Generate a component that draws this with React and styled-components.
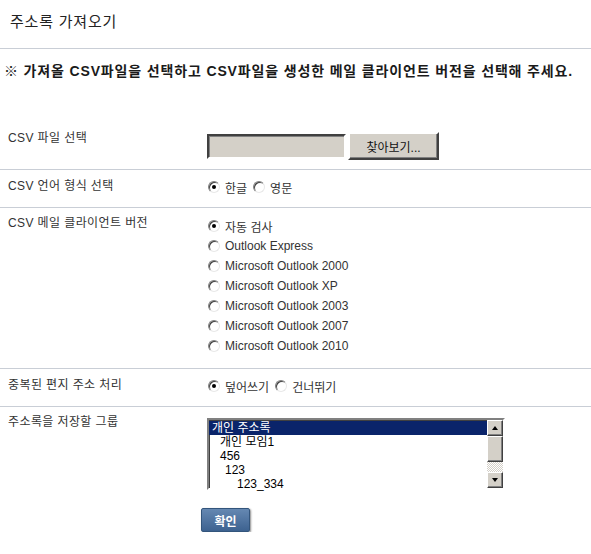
import React, { useState } from "react";
import styled, { createGlobalStyle } from "styled-components";

const GlobalStyle = createGlobalStyle`
  body {
    margin: 0;
    background: #fff;
    font-family: "Liberation Sans", "Noto Sans CJK KR", sans-serif;
    color: #222;
  }
`;

const Page = styled.div`
  width: 591px;
  display: flex;
  flex-direction: column;
`;

const Header = styled.div`
  height: 34px;
  border-bottom: 1px solid #c9ced6;
  padding: 14px 0 0 10px;
`;

const Title = styled.h1`
  margin: 0;
  font-size: 15px;
  font-weight: normal;
  letter-spacing: 0.8px;
  line-height: 16px;
  color: #222;
`;

const Notice = styled.p`
  margin: 0;
  padding: 13px 0 0 4px;
  font-size: 14px;
  font-weight: bold;
  letter-spacing: 0.85px;
  line-height: 18px;
  color: #1a1a1a;
  white-space: nowrap;
`;

const Form = styled.div`
  margin-top: 42px;
  display: flex;
  flex-direction: column;
`;

const Row = styled.div`
  display: grid;
  grid-template-columns: 207px 1fr;
  align-items: start;
  padding: ${(p) => p.$pad};
  border-bottom: ${(p) => (p.$last ? "none" : "1px solid #c9ced6")};
`;

const Label = styled.div`
  padding-left: 8px;
  margin-top: ${(p) => p.$mt || 0}px;
  font-size: 12px;
  line-height: 12px;
  letter-spacing: 0.4px;
  color: #333;
  white-space: nowrap;
`;

const Field = styled.div`
  display: flex;
  flex-direction: ${(p) => (p.$column ? "column" : "row")};
  align-items: ${(p) => (p.$column ? "flex-start" : "center")};
`;

const FileBox = styled.div`
  width: 135px;
  height: 21px;
  background: #d4d0c8;
  border: 2px solid;
  border-color: #404040 #fff #fff #404040;
  box-shadow: inset 1px 1px 0 #808080;
`;

const BrowseButton = styled.button`
  width: 91px;
  height: 28px;
  margin-left: 2px;
  padding: 0;
  background: #d4d0c8;
  border: 2px solid;
  border-color: #fff #404040 #404040 #fff;
  box-shadow: inset -1px -1px 0 #808080;
  font-family: "Liberation Sans", "Noto Sans CJK KR", sans-serif;
  font-size: 12px;
  color: #111;
`;

const Option = styled.label`
  display: inline-flex;
  align-items: center;
  height: 20px;
  margin-right: 5px;
  font-size: 12px;
  color: #333;
  cursor: pointer;
`;

const RadioDot = styled.span`
  width: 10px;
  height: 10px;
  margin: 0 5px 0 1px;
  border-radius: 50%;
  background: #fff;
  border: 1px solid;
  border-color: #808080 #e8e8e8 #e8e8e8 #808080;
  box-shadow: inset 1px 1px 0 #404040;
  display: flex;
  align-items: center;
  justify-content: center;
  flex-shrink: 0;

  &::after {
    content: "";
    width: 4px;
    height: 4px;
    border-radius: 50%;
    background: ${(p) => (p.$checked ? "#000" : "transparent")};
  }
`;

const ListBox = styled.div`
  width: 294px;
  height: 68px;
  border: 2px solid;
  border-color: #808080 #fff #fff #808080;
  box-shadow: inset 1px 1px 0 #404040;
  display: flex;
  background: #fff;
`;

const ListItems = styled.div`
  flex: 1;
  display: flex;
  flex-direction: column;
  padding-top: 1px;
`;

const ListItem = styled.div`
  height: 14px;
  line-height: 14px;
  font-size: 12px;
  padding-left: ${(p) => p.$indent}px;
  background: ${(p) => (p.$selected ? "#0a246a" : "transparent")};
  color: ${(p) => (p.$selected ? "#fff" : "#000")};
  white-space: nowrap;
`;

const ScrollBar = styled.div`
  width: 16px;
  display: flex;
  flex-direction: column;
`;

const ScrollButton = styled.div`
  width: 16px;
  height: 16px;
  box-sizing: border-box;
  background: #d4d0c8;
  border: 1px solid;
  border-color: #fff #404040 #404040 #fff;
  box-shadow: inset -1px -1px 0 #808080;
  display: flex;
  align-items: center;
  justify-content: center;
`;

const Thumb = styled(ScrollButton)`
  height: 26px;
`;

const Track = styled.div`
  flex: 1;
  background: repeating-conic-gradient(#fff 0 25%, #d4d0c8 0 50%) 0 0 / 2px 2px;
`;

const Arrow = styled.span`
  width: 0;
  height: 0;
  border-left: 3px solid transparent;
  border-right: 3px solid transparent;
  ${(p) => (p.$down ? "border-top: 4px solid #000;" : "border-bottom: 4px solid #000;")}
`;

const Actions = styled.div`
  padding: 18px 0 0 201px;
`;

const ConfirmButton = styled.button`
  width: 49px;
  height: 24px;
  padding: 0;
  border: 1px solid #33557c;
  border-radius: 2px;
  background: linear-gradient(#6588b2, #3d6290);
  box-shadow: 1px 1px 2px rgba(0, 0, 0, 0.45);
  color: #fff;
  font-family: "Liberation Sans", "Noto Sans CJK KR", sans-serif;
  font-size: 12px;
  font-weight: bold;
  cursor: pointer;
`;

const Radio = ({ checked, onClick, children }) => (
  <Option onClick={onClick}>
    <RadioDot $checked={checked} />
    {children}
  </Option>
);

const clients = [
  "자동 검사",
  "Outlook Express",
  "Microsoft Outlook 2000",
  "Microsoft Outlook XP",
  "Microsoft Outlook 2003",
  "Microsoft Outlook 2007",
  "Microsoft Outlook 2010",
];

const groups = [
  { name: "개인 주소록", indent: 3 },
  { name: "개인 모임1", indent: 11 },
  { name: "456", indent: 11 },
  { name: "123", indent: 16 },
  { name: "123_334", indent: 28 },
];

const App = () => {
  const [lang, setLang] = useState("ko");
  const [client, setClient] = useState(0);
  const [dup, setDup] = useState("over");
  const [group, setGroup] = useState(0);

  return (
    <Page>
      <GlobalStyle />
      <Header>
        <Title>주소록 가져오기</Title>
      </Header>
      <Notice>
        ※ 가져올 CSV파일을 선택하고 CSV파일을 생성한 메일 클라이언트 버전을 선택해 주세요.
      </Notice>
      <Form>
        <Row $pad="10px 0 9px">
          <Label>CSV 파일 선택</Label>
          <Field>
            <FileBox />
            <BrowseButton>찾아보기...</BrowseButton>
          </Field>
        </Row>
        <Row $pad="7px 0 10px">
          <Label $mt={3}>CSV 언어 형식 선택</Label>
          <Field>
            <Radio checked={lang === "ko"} onClick={() => setLang("ko")}>한글</Radio>
            <Radio checked={lang === "en"} onClick={() => setLang("en")}>영문</Radio>
          </Field>
        </Row>
        <Row $pad="8px 0 12px">
          <Label $mt={1}>CSV 메일 클라이언트 버전</Label>
          <Field $column>
            {clients.map((c, i) => (
              <Radio key={c} checked={client === i} onClick={() => setClient(i)}>
                {c}
              </Radio>
            ))}
          </Field>
        </Row>
        <Row $pad="7px 0 10px">
          <Label $mt={3}>중복된 편지 주소 처리</Label>
          <Field>
            <Radio checked={dup === "over"} onClick={() => setDup("over")}>덮어쓰기</Radio>
            <Radio checked={dup === "skip"} onClick={() => setDup("skip")}>건너뛰기</Radio>
          </Field>
        </Row>
        <Row $pad="11px 0 0" $last>
          <Label $mt={-2}>주소록을 저장할 그룹</Label>
          <Field>
            <ListBox>
              <ListItems>
                {groups.map((g, i) => (
                  <ListItem
                    key={g.name}
                    $indent={g.indent}
                    $selected={group === i}
                    onClick={() => setGroup(i)}
                  >
                    {g.name}
                  </ListItem>
                ))}
              </ListItems>
              <ScrollBar>
                <ScrollButton>
                  <Arrow />
                </ScrollButton>
                <Thumb />
                <Track />
                <ScrollButton>
                  <Arrow $down />
                </ScrollButton>
              </ScrollBar>
            </ListBox>
          </Field>
        </Row>
      </Form>
      <Actions>
        <ConfirmButton>확인</ConfirmButton>
      </Actions>
    </Page>
  );
};

export default App;
